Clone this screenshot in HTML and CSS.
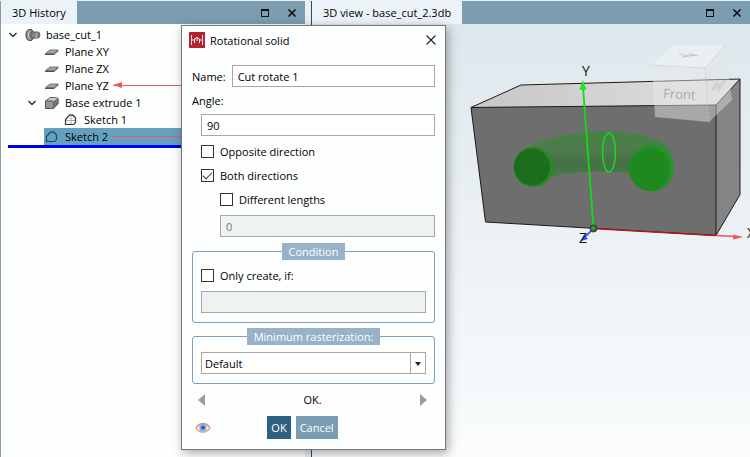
FILE: index.html
```html
<!DOCTYPE html>
<html lang="en">
<head>
  <meta charset="UTF-8">
  <title>base_cut_2.3db</title>
  <link rel="stylesheet" href="styles.css">
</head>
<body>
  <main class="workspace">

    <section class="panel">
      <header class="bar">
        <h2 class="tab tab-history">3D History</h2>
        <div class="bar-buttons">
          <button type="button" aria-label="Maximize history">
            <svg width="10" height="10" viewBox="0 0 10 10"><path d="M1 1.5h8M1.5 1v8M8.5 1v8M1 8.5h8M1 2.5h8" stroke="#111" fill="none"/></svg>
          </button>
          <button type="button" aria-label="Close history">
            <svg width="10" height="10" viewBox="0 0 10 10"><path d="M1.5 1.5l7 7M8.5 1.5l-7 7" stroke="#111" stroke-width="1.6"/></svg>
          </button>
        </div>
      </header>

      <ul class="tree">
        <li class="node level-0">
          <svg class="chevron" width="10" height="10" viewBox="0 0 10 10"><path d="M1.5 3L5 6.5 8.5 3" stroke="#333" stroke-width="1.5" fill="none"/></svg>
          <svg class="icon" width="16" height="14" viewBox="0 0 16 14">
            <path d="M4.500 1.500C2 1.500 1 4 1 7s1 5.500 3.500 5.500H6c2-.5 2.500-3 2.500-5.500S8 2 6 1.500z" fill="#8f8f8f" stroke="#444"/>
            <path d="M6 4h7c1.300 0 1.800 1.500 1.800 3s-.5 3-1.800 3H6z" fill="#858585" stroke="#555"/>
            <path d="M4.500 3C3 4.500 3 9.500 4.500 11M12 4.500c-1 1.500-1 4 0 5.500" stroke="#c6c6c6" fill="none"/>
          </svg>
          <span>base_cut_1</span>
        </li>
        <li class="node level-1">
          <svg class="icon" width="16" height="14" viewBox="0 0 16 14"><path d="M1.500 8.500L6 5h8L10 8.500z" fill="#a2a2a2" stroke="#777"/><path d="M1 9.500h9L14.500 5.500" stroke="#4f4f4f" fill="none"/></svg>
          <span>Plane XY</span>
        </li>
        <li class="node level-1">
          <svg class="icon" width="16" height="14" viewBox="0 0 16 14"><path d="M1.500 8.500L6 5h8L10 8.500z" fill="#a2a2a2" stroke="#777"/><path d="M1 9.500h9L14.500 5.500" stroke="#4f4f4f" fill="none"/></svg>
          <span>Plane ZX</span>
        </li>
        <li class="node level-1">
          <svg class="icon" width="16" height="14" viewBox="0 0 16 14"><path d="M1.500 8.500L6 5h8L10 8.500z" fill="#a2a2a2" stroke="#777"/><path d="M1 9.500h9L14.500 5.500" stroke="#4f4f4f" fill="none"/></svg>
          <span>Plane YZ</span>
          <i class="link-line link-head"></i>
        </li>
        <li class="node level-1 has-children">
          <svg class="chevron" width="10" height="10" viewBox="0 0 10 10"><path d="M1.500 3L5 6.500 8.500 3" stroke="#333" stroke-width="1.500" fill="none"/></svg>
          <svg class="icon" width="16" height="14" viewBox="0 0 16 14">
            <path d="M1.500 5L6 1.500h6.500q1.500 0 1.500 1.500v5l-4.500 4.500z" fill="#c9c9c9" stroke="#666"/>
            <path d="M1.500 5H8q1.500 0 1.500 1.500v6h-8z" fill="#949494" stroke="#555"/>
            <path d="M9.500 6L14 2.500V8l-4.500 4.500z" fill="#757575" stroke="#666"/>
          </svg>
          <span>Base extrude 1</span>
        </li>
        <li class="node level-2">
          <svg class="icon" width="16" height="14" viewBox="0 0 16 14">
            <path d="M8 2v10M3 7.500h10" stroke="#aaa"/>
            <path d="M2.500 11.500v-5l4-4.500q4-.8 6 3v4.500q-1 2-3 2z" fill="none" stroke="#333" stroke-width="1.200"/>
          </svg>
          <span>Sketch 1</span>
        </li>
        <li class="node level-1 selected">
          <svg class="icon" width="16" height="14" viewBox="0 0 16 14"><path d="M2.500 11.500v-5l4-4.500q4-.8 6 3v4.500q-1 2-3 2z" fill="none" stroke="#1d4968" stroke-width="1.200"/></svg>
          <span>Sketch 2</span>
          <i class="link-line"></i>
        </li>
      </ul>
    </section>

    <section class="panel panel-view">
      <header class="bar">
        <h2 class="tab tab-view">3D view - base_cut_2.3db</h2>
        <div class="bar-buttons">
          <button type="button" aria-label="Maximize view">
            <svg width="10" height="10" viewBox="0 0 10 10"><path d="M1 1.500h8M1.500 1v8M8.500 1v8M1 8.500h8M1 2.500h8" stroke="#111" fill="none"/></svg>
          </button>
          <button type="button" aria-label="Close view">
            <svg width="10" height="10" viewBox="0 0 10 10"><path d="M1.500 1.500l7 7M8.500 1.500l-7 7" stroke="#111" stroke-width="1.600"/></svg>
          </button>
        </div>
      </header>

      <svg class="scene" viewBox="312 24 438 433" preserveAspectRatio="xMinYMin slice">
        <defs>
          <linearGradient id="top" x1="0" x2="1"><stop offset="0" stop-color="#c6c6c6"/><stop offset="1" stop-color="#e2e0e0"/></linearGradient>
          <linearGradient id="tube" x1="0" y1="0" x2="0" y2="1">
            <stop offset="0" stop-color="#458245"/><stop offset=".35" stop-color="#4f7a4f"/>
            <stop offset=".6" stop-color="#456f45"/><stop offset="1" stop-color="#438643"/>
          </linearGradient>
        </defs>

        <!-- block -->
        <path d="M471 107.500L521 85l219-6-24 26z" fill="url(#top)"/>
        <path d="M471 107.500l245-2.500v130.500L485.500 222z" fill="#6e6e6e"/>
        <path d="M716 105l24-26v115.500l-24 41z" fill="#858585"/>
        <path d="M471 107.500L521 85l219-6v115.500l-24 41L485.500 222zM471 107.500l245-2.500 24-26M716 105v130.500" fill="none" stroke="#1b1b1b" stroke-linejoin="round"/>

        <!-- rotated cut -->
        <path d="M527 149C550 135 583 132 611 132.500c26 .5 49 5 60 18L632 173c-24-2-58-3-82 4l-14 8z" fill="url(#tube)"/>
        <path d="M527 149C550 135 583 132 611 132.500c26 .5 49 5 60 18" fill="none" stroke="#3a8a3a"/>
        <ellipse cx="533.500" cy="167" rx="20" ry="20" fill="#278727"/>
        <ellipse cx="532" cy="167" rx="18" ry="18.500" fill="#1c6e1c"/>
        <ellipse cx="651.500" cy="168" rx="22.500" ry="23.500" fill="#249424"/>
        <ellipse cx="649.500" cy="169.500" rx="20" ry="21.500" fill="#208820"/>
        <ellipse cx="609" cy="152.500" rx="6.500" ry="19.500" fill="none" stroke="#19dc19" stroke-width="1.500"/>

        <!-- view cube -->
        <path d="M652 65l21-19h52l-20 22z" fill="#eef2f3" fill-opacity=".7"/>
        <path d="M652 65l53 3 4 54-54-5z" fill="#e8e8e8" fill-opacity=".48"/>
        <path d="M705 68l20-22 7 54-23 22z" fill="#e2e4e4" fill-opacity=".42"/>
        <path d="M652 65l53 3 20-22M705 68l4 54" fill="none" stroke="#c2c6c8" stroke-opacity=".6" stroke-dasharray="3 1"/>
        <path d="M679 53l7 3 4-2 8 2M682 57l14-2" fill="none" stroke="#c4c8ca"/>
        <path d="M712 90l5-6 2 5 6-9" stroke="#b9b9b9" stroke-opacity=".35" stroke-width="4" fill="none"/>
        <text class="cube-label" x="663" y="98" transform="rotate(3 663 98)">Front</text>

        <!-- axes -->
        <path d="M593.500 228L583 87" stroke="#12dc12" stroke-width="1.800"/>
        <path d="M582.500 80l4 9.500-7 .5z" fill="#22e622"/>
        <path d="M593 228.500l123 7" stroke="#b01717" stroke-width="1.500"/>
        <path d="M716 235.500l20 1" stroke="#ef5555" stroke-width="1.500"/>
        <path d="M743 237l-10 2.500.5-5z" fill="#ef5555"/>
        <path d="M593 229l-9 9" stroke="#4d65f5" stroke-width="2"/>
        <path d="M581 241l3-6 4 4z" fill="#3350ee"/>
        <circle cx="593.500" cy="228.500" r="3.500" fill="#3f6352" stroke="#2b3d35"/>
        <circle cx="593" cy="228" r="1.500" fill="#12c912"/>
        <text class="axis" x="582" y="76">Y</text>
        <text class="axis" x="579" y="243">Z</text>
        <text class="axis" x="747" y="238">X</text>
      </svg>
    </section>

  </main>

  <form class="dialog" onsubmit="return false;">
    <header class="dialog-title">
      <svg width="16" height="16" viewBox="0 0 16 16">
        <rect width="16" height="16" fill="#b5232f"/>
        <path d="M2.500 3v10M13.500 3v10M2.500 8H5M11 8h2.500" stroke="#f6d9db" fill="none"/>
        <path d="M5.500 11V7q2.500-3 5 0v4M8 6v3" stroke="#fff" fill="none"/>
      </svg>
      <h1>Rotational solid</h1>
      <button type="button" class="close" aria-label="Close">
        <svg width="10" height="10" viewBox="0 0 10 10"><path d="M.5.5l9 9M9.500.5l-9 9" stroke="#222" stroke-width="1.100"/></svg>
      </button>
    </header>

    <div class="row name-row">
      <label for="name">Name:</label>
      <input type="text" id="name" value="Cut rotate 1">
    </div>

    <label class="angle-label" for="angle">Angle:</label>
    <div class="group">
      <input type="text" id="angle" value="90">
      <label class="check"><input type="checkbox"> Opposite direction</label>
      <label class="check"><input type="checkbox" checked> Both directions</label>
      <div class="subgroup">
        <label class="check"><input type="checkbox"> Different lengths</label>
        <input type="text" aria-label="Length" value="0" disabled>
      </div>
    </div>

    <fieldset class="box">
      <legend>Condition</legend>
      <label class="check"><input type="checkbox"> Only create, if:</label>
      <input type="text" aria-label="Condition" disabled>
    </fieldset>

    <fieldset class="box raster">
      <legend>Minimum rasterization:</legend>
      <div class="select">
        <select aria-label="Minimum rasterization">
          <option>Default</option>
        </select>
      </div>
    </fieldset>

    <div class="row status">
      <button type="button" aria-label="Previous"><svg width="8" height="12" viewBox="0 0 8 12"><path d="M7 0v12L0 6z" fill="#9b9b9b"/></svg></button>
      <output>OK.</output>
      <button type="button" aria-label="Next"><svg width="8" height="12" viewBox="0 0 8 12"><path d="M1 0v12l7-6z" fill="#9b9b9b"/></svg></button>
    </div>

    <footer class="row actions">
      <button type="button" class="preview" aria-label="Preview">
        <svg width="16" height="12" viewBox="0 0 16 12">
          <path d="M1 6q7-8.500 14 0-7 8.500-14 0z" fill="#fff" stroke="#e0a889" stroke-width="1.500"/>
          <path d="M1 4.500q7-6.500 14 0" fill="none" stroke="#c4947a"/>
          <circle cx="8" cy="5.800" r="3.700" fill="#7da7e6"/>
          <circle cx="8" cy="5.500" r="1.500" fill="#243d7c"/>
        </svg>
      </button>
      <button type="submit" class="btn btn-ok">OK</button>
      <button type="button" class="btn">Cancel</button>
    </footer>
  </form>
</body>
</html>
```
FILE: styles.css
```css
* {
  box-sizing: border-box;
}

body {
  margin: 0;
  font-family: "Open Sans", "Noto Sans", sans-serif;
  font-size: 11px;
  line-height: 17px;
  color: #000;
  background: #e9f0f4;
}

h1, h2 {
  margin: 0;
  font-size: 11px;
  font-weight: normal;
}

button, input, select {
  font: inherit;
  color: inherit;
}

button {
  padding: 0;
  border: none;
  background: none;
  cursor: pointer;
}

svg {
  display: block;
  flex: none;
}

/* docked panels */
.workspace {
  display: grid;
  grid-template-columns: 305px 1fr;
  gap: 6px;
  min-height: 100vh;
  padding-top: 1px;
}

.panel {
  display: flex;
  flex-direction: column;
  background: #fdfefe;
  border-left: 1px solid #8f9ba3;
  overflow: hidden;
}

.panel-view {
  background: linear-gradient(#dce6eb, #fafcfd);
  border-left-color: #444;
}

.bar {
  display: flex;
  justify-content: space-between;
  height: 23px;
  background: #7b9db2;
}

.tab {
  padding: 3px 11px;
  background: #ebf3f8;
}

.bar-buttons {
  display: flex;
  align-items: center;
  gap: 17px;
  padding-right: 8px;
}

/* history tree */
.tree {
  list-style: none;
  margin: 0 0 0 7px;
  padding: 2px 0 0;
  border-bottom: 3px solid #0000f0;
}

.node {
  display: flex;
  align-items: center;
  height: 17px;
  white-space: nowrap;
}

.chevron {
  margin-right: 7px;
}

.icon {
  margin-right: 5px;
}

.level-1 {
  margin-left: 36px;
}

.level-1.has-children {
  margin-left: 19px;
}

.level-2 {
  margin-left: 55px;
}

.selected {
  background: #65a0bf;
}

.link-line {
  position: relative;
  flex: 1;
  height: 1px;
  margin-left: 4px;
  background: #ee5b5b;
}

.link-head::before {
  content: "";
  position: absolute;
  left: 0;
  top: -3px;
  border: solid transparent;
  border-width: 3px 9px 3px 0;
  border-right-color: #ee5b5b;
}

/* 3d scene */
.scene {
  flex: 1;
  width: 100%;
  min-height: 0;
}

.axis {
  font-size: 14px;
  fill: #111;
}

.cube-label {
  font-size: 13px;
  fill: #a9a9a9;
}

/* dialog */
.dialog {
  position: absolute;
  left: 181px;
  top: 25px;
  width: 265px;
  padding: 5px 10px 10px;
  background: #fdfefe;
  border: 1px solid #777;
  box-shadow: 2px 3px 10px rgba(0, 0, 0, 0.35);
}

.dialog-title {
  display: flex;
  align-items: center;
  gap: 5px;
  height: 18px;
  margin-left: -3px;
}

.dialog-title .close {
  margin-left: auto;
  margin-right: -1px;
}

.row {
  display: flex;
  align-items: center;
}

.name-row {
  gap: 6px;
  margin-top: 16px;
}

input[type="text"] {
  display: block;
  width: 100%;
  min-width: 0;
  height: 22px;
  padding: 0 5px;
  border: 1px solid #a9a6a6;
  border-radius: 0;
  background: #fff;
}

input[type="text"]:disabled {
  background: #eff2f3;
  color: #777;
}

.angle-label {
  display: block;
  margin: 5px 0;
}

.group {
  padding-left: 9px;
}

.subgroup {
  padding-left: 19px;
}

.check {
  display: flex;
  align-items: center;
  gap: 6px;
  height: 17px;
  margin: 7px 0;
}

.check input {
  appearance: none;
  flex: none;
  width: 13px;
  height: 13px;
  margin: 0;
  border: 1px solid #333;
  background: #fff;
}

.check input:checked::before {
  content: "";
  display: block;
  width: 8px;
  height: 4px;
  margin: 2px 1px;
  border: solid #333;
  border-width: 0 0 1px 1px;
  transform: rotate(-45deg);
}

.box {
  min-width: 0;
  margin: 6px 0 0;
  padding: 0 8px 9px;
  border: 1px solid #7fa2ba;
  border-radius: 3px;
}

.box legend {
  margin: 0 auto;
  padding: 0 7px;
  color: #fff;
  background: #98b3c8;
}

.raster {
  margin-top: 5px;
}

.select {
  position: relative;
  margin-top: 7px;
}

.select select {
  display: block;
  appearance: none;
  width: 100%;
  height: 22px;
  padding: 0 20px 0 3px;
  border: 1px solid #a9a6a6;
  border-radius: 0;
  background: #fff;
}

.select::before {
  content: "";
  position: absolute;
  right: 15px;
  top: 0;
  bottom: 0;
  border-left: 1px solid #a9a6a6;
}

.select::after {
  content: "";
  position: absolute;
  right: 5px;
  top: 10px;
  border: solid transparent;
  border-width: 4px 3px 0;
  border-top-color: #222;
}

.status {
  justify-content: space-between;
  margin-top: 7px;
  padding: 0 8px 0 6px;
}

.actions {
  justify-content: center;
  position: relative;
  gap: 5px;
  margin-top: 8px;
  padding-right: 22px;
}

.preview {
  position: absolute;
  left: 3px;
}

.btn {
  height: 23px;
  padding: 0 4px;
  color: #fff;
  background: #7b9db2;
}

.btn-ok {
  background: #30607f;
}
```
